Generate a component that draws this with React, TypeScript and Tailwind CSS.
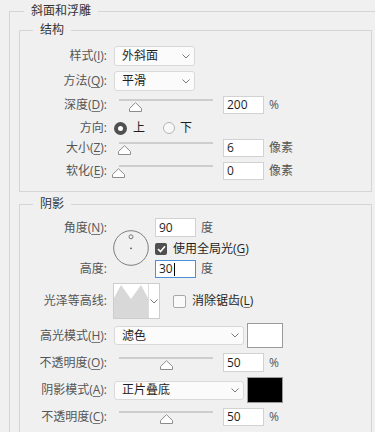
import type { ReactNode } from "react";

const FONT = "font-['Open_Sans','Noto_Sans_CJK_SC',sans-serif]";

function K({ k }: { k: string }) {
  return <span className="underline decoration-[#777] underline-offset-2">{k}</span>;
}

function Label({ children }: { children: ReactNode }) {
  return (
    <div className="w-[87px] shrink-0 text-right text-[12px] leading-[16px] text-[#555]">
      {children}
    </div>
  );
}

function Chevron() {
  return (
    <svg width="8" height="5" viewBox="0 0 8 5" className="block">
      <path d="M0.5 0.5 L4 4 L7.5 0.5" fill="none" stroke="#7a7a7a" strokeWidth="1" />
    </svg>
  );
}

function Select({ value, wide }: { value: string; wide?: boolean }) {
  return (
    <div
      className={
        (wide ? "w-[130px] h-[19px] " : "w-[81px] h-[20px] ") +
        "ml-[7px] flex items-center justify-between rounded-[3px] border border-[#d9d9d9] bg-[#fbfbfb] pl-[7px] pr-[4px] text-[12px] text-[#1f1f1f]"
      }
    >
      <span>{value}</span>
      <Chevron />
    </div>
  );
}

function Slider({ thumb, top }: { thumb: number; top?: boolean }) {
  return (
    <div className={(top ? "pt-[4px] " : "pt-[3px] ") + "ml-[5px] w-[101px] self-start"}>
      <div className="ml-[7px] h-[2px] w-[94px] bg-[#cdcdcd]" />
      <svg width="13" height="10" viewBox="0 0 13 10" className="mt-[1px] block" style={{ marginLeft: thumb }}>
        <path d="M0.5 9.5 L0.5 6.5 L6.5 0.7 L12.5 6.5 L12.5 9.5 Z" fill="#fff" stroke="#8c8c8c" strokeWidth="1" strokeLinejoin="round" />
      </svg>
    </div>
  );
}

function NumBox({ value, ml = "ml-[10px]", focus }: { value: string; ml?: string; focus?: boolean }) {
  return (
    <div
      className={
        ml +
        (focus ? " border-[#4a90d9]" : " border-[#d2d2d2]") +
        " flex h-full w-[41px] items-center border bg-white pl-[3px] text-[12px] text-[#1f1f1f]"
      }
    >
      {value}
      {focus && <span className="ml-[1px] h-[13px] w-px bg-black" />}
    </div>
  );
}

function Unit({ children }: { children: ReactNode }) {
  return <span className="ml-[5px] text-[12px] text-[#555]">{children}</span>;
}

function Check({ on }: { on?: boolean }) {
  if (on)
    return (
      <div className="flex size-[12px] items-center justify-center rounded-[2px] bg-[#4f4f4f]">
        <svg width="9" height="8" viewBox="0 0 9 8">
          <path d="M1 4 L3.5 6.5 L8 1.2" fill="none" stroke="#fff" strokeWidth="1.6" />
        </svg>
      </div>
    );
  return <div className="size-[13px] rounded-[2px] border border-[#a8a8a8] bg-[#fafafa]" />;
}

function Swatch({ dark }: { dark?: boolean }) {
  return (
    <div
      className={
        (dark ? "bg-black" : "bg-white") +
        " ml-[3px] h-full w-[36px] border border-[#9a9a9a]"
      }
    />
  );
}

export default function App() {
  return (
    <div className={FONT + " h-[432px] w-[375px] overflow-hidden bg-[#f0f0f0] pt-[3px] text-[12px]"}>
      <fieldset className="ml-[9px] h-[520px] border-t border-l border-[#d5d5d5]">
        <legend className="ml-[14px] px-[7px] text-[12px] leading-[16px] text-[#333]">斜面和浮雕</legend>

        {/* 结构 */}
        <fieldset className="mt-[3px] mr-[3px] ml-[9px] border border-[#d5d5d5] pb-[11px]">
          <legend className="ml-[13px] px-[7px] text-[12px] leading-[16px] text-[#333]">结构</legend>

          <div className="mt-[8px] flex h-[20px] items-center">
            <Label>样式(<K k="I" />):</Label>
            <Select value="外斜面" />
          </div>
          <div className="mt-[5px] flex h-[20px] items-center">
            <Label>方法(<K k="Q" />):</Label>
            <Select value="平滑" />
          </div>
          <div className="mt-[5px] flex h-[18px] items-center">
            <Label>深度(<K k="D" />):</Label>
            <Slider thumb={17} />
            <NumBox value="200" />
            <Unit>%</Unit>
          </div>
          <div className="mt-[5px] flex h-[18px] items-center">
            <Label>方向:</Label>
            <div className="ml-[7px] size-[13px] rounded-full border-[4px] border-[#505050] bg-white" />
            <span className="ml-[6px] text-[#1f1f1f]">上</span>
            <div className="ml-[18px] size-[12px] rounded-full border border-[#b5b5b5] bg-[#f8f8f8]" />
            <span className="ml-[5px] text-[#1f1f1f]">下</span>
          </div>
          <div className="mt-[2px] flex h-[18px] items-center">
            <Label>大小(<K k="Z" />):</Label>
            <Slider thumb={6} />
            <NumBox value="6" />
            <Unit>像素</Unit>
          </div>
          <div className="mt-[5px] flex h-[18px] items-center">
            <Label>软化(<K k="E" />):</Label>
            <Slider thumb={0} />
            <NumBox value="0" />
            <Unit>像素</Unit>
          </div>
        </fieldset>

        {/* 阴影 */}
        <fieldset className="mt-[4px] mr-[3px] ml-[9px] h-[400px] border border-[#d5d5d5]">
          <legend className="ml-[13px] px-[7px] text-[12px] leading-[16px] text-[#333]">阴影</legend>

          <div className="mt-[6px] grid grid-cols-[87px_auto_1fr] grid-rows-[19px_19px_18px] gap-y-[2px]">
            <div className="col-start-1 row-start-1 flex items-center justify-end">
              <Label>角度(<K k="N" />):</Label>
            </div>
            <div className="col-start-1 row-start-3 flex items-center justify-end">
              <Label>高度:</Label>
            </div>
            <div className="col-start-2 row-span-3 row-start-1 ml-[6px] self-center">
              <svg width="36" height="36" viewBox="0 0 36 36" className="block">
                <circle cx="18" cy="18" r="17.3" fill="none" stroke="#7c7c7c" strokeWidth="1" />
                <circle cx="18" cy="6.8" r="2" fill="none" stroke="#6a6a6a" strokeWidth="0.9" />
                <circle cx="18" cy="18.3" r="0.9" fill="#555" />
              </svg>
            </div>
            <div className="col-start-3 row-start-1 flex items-center">
              <NumBox value="90" ml="ml-[6px]" />
              <Unit>度</Unit>
            </div>
            <div className="col-start-3 row-start-2 ml-[6px] flex items-center">
              <Check on />
              <span className="ml-[6px] text-[#1f1f1f]">
                使用全局光(<K k="G" />)
              </span>
            </div>
            <div className="col-start-3 row-start-3 flex items-center">
              <NumBox value="30" ml="ml-[6px]" focus />
              <Unit>度</Unit>
            </div>
          </div>

          <div className="mt-[5px] flex h-[36px] items-center">
            <Label>光泽等高线:</Label>
            <div className="ml-[6px] flex h-full w-[47px] border border-[#cdcdcd] bg-white">
              <svg width="34" height="34" viewBox="0 0 34 34" className="block">
                <path d="M0 34 L0 14 L7 1 L17 15 L27 1 L34 14 L34 34 Z" fill="#d8d8d8" />
              </svg>
              <div className="flex flex-1 items-center justify-center border-l border-[#dcdcdc]">
                <Chevron />
              </div>
            </div>
            <div className="ml-[13px]">
              <Check />
            </div>
            <span className="ml-[6px] text-[#1f1f1f]">
              消除锯齿(<K k="L" />)
            </span>
          </div>

          <div className="mt-[4px] flex h-[25px] items-center">
            <Label>高光模式(<K k="H" />):</Label>
            <Select value="滤色" wide />
            <Swatch />
          </div>
          <div className="mt-[5px] flex h-[19px] items-center">
            <Label>不透明度(<K k="O" />):</Label>
            <Slider thumb={48} top />
            <NumBox value="50" />
            <Unit>%</Unit>
          </div>
          <div className="mt-[5px] flex h-[26px] items-center">
            <Label>阴影模式(<K k="A" />):</Label>
            <Select value="正片叠底" wide />
            <Swatch dark />
          </div>
          <div className="mt-[5px] flex h-[18px] items-center">
            <Label>不透明度(<K k="C" />):</Label>
            <Slider thumb={48} />
            <NumBox value="50" />
            <Unit>%</Unit>
          </div>
        </fieldset>
      </fieldset>
    </div>
  );
}
